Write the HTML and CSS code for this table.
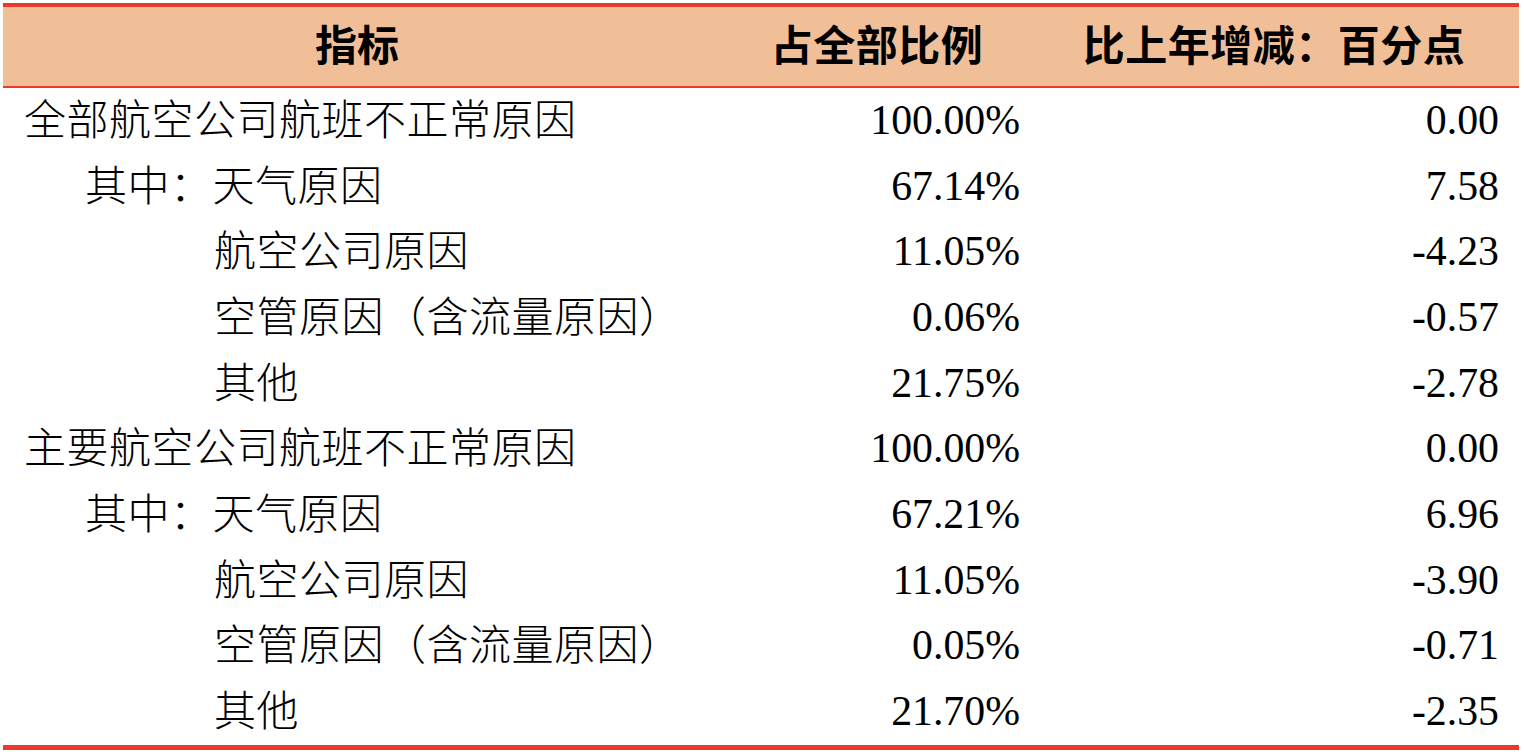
FILE: index.html
```html
<!DOCTYPE html>
<html lang="zh-CN">
<head>
<meta charset="utf-8">
<link rel="stylesheet" href="styles.css">
</head>
<body>
<div class="table">
  <div class="row head">
    <div class="c1">指标</div>
    <div class="c2">占全部比例</div>
    <div class="c3">比上年增减：百分点</div>
  </div>
  <div class="body">
    <div class="row"><div class="c1">全部航空公司航班不正常原因</div><div class="c2 num">100.00%</div><div class="c3 num">0.00</div></div>
    <div class="row"><div class="c1 l1">其中：天气原因</div><div class="c2 num">67.14%</div><div class="c3 num">7.58</div></div>
    <div class="row"><div class="c1 l2">航空公司原因</div><div class="c2 num">11.05%</div><div class="c3 num">-4.23</div></div>
    <div class="row"><div class="c1 l2">空管原因（含流量原因）</div><div class="c2 num">0.06%</div><div class="c3 num">-0.57</div></div>
    <div class="row"><div class="c1 l2">其他</div><div class="c2 num">21.75%</div><div class="c3 num">-2.78</div></div>
    <div class="row"><div class="c1">主要航空公司航班不正常原因</div><div class="c2 num">100.00%</div><div class="c3 num">0.00</div></div>
    <div class="row"><div class="c1 l1">其中：天气原因</div><div class="c2 num">67.21%</div><div class="c3 num">6.96</div></div>
    <div class="row"><div class="c1 l2">航空公司原因</div><div class="c2 num">11.05%</div><div class="c3 num">-3.90</div></div>
    <div class="row"><div class="c1 l2">空管原因（含流量原因）</div><div class="c2 num">0.05%</div><div class="c3 num">-0.71</div></div>
    <div class="row"><div class="c1 l2">其他</div><div class="c2 num">21.70%</div><div class="c3 num">-2.35</div></div>
  </div>
</div>
</body>
</html>
```

FILE: styles.css
```css
html, body {
  margin: 0;
  padding: 0;
  background: #ffffff;
}
body {
  padding: 3px 5px 0 3px;
  font-family: "Liberation Serif", "Noto Sans CJK SC", serif;
  color: #000;
}
.table {
  width: 1516px;
  border-top: 4px solid #ea3a2b;
  border-bottom: 5px solid #ea3a2b;
}
.row {
  display: grid;
  grid-template-columns: 708px 334px 1fr;
  align-items: center;
  height: 65.7px;
  font-size: 41.8px;
  line-height: 1;
}
.head {
  height: 79px;
  background: #f1bf97;
  border-bottom: 2px solid #ea3a2b;
  font-weight: bold;
  font-size: 42px;
}
.head .c1, .head .c2, .head .c3 {
  text-align: center;
  padding: 0;
  font-weight: bold;
  letter-spacing: 0;
}
.head .c2 {
  padding-right: 2px;
  letter-spacing: 0.5px;
}
.head .c3 {
  padding-right: 16px;
  letter-spacing: 0.5px;
}
.c1 {
  padding-left: 21px;
  white-space: nowrap;
  font-weight: 300;
  font-size: 42px;
  letter-spacing: 0.5px;
}
.c1.l1 {
  padding-left: 82px;
}
.c1.l2 {
  padding-left: 211px;
}
.c2 {
  text-align: right;
  padding-right: 25px;
}
.c3 {
  text-align: right;
  padding-right: 20px;
}
```
